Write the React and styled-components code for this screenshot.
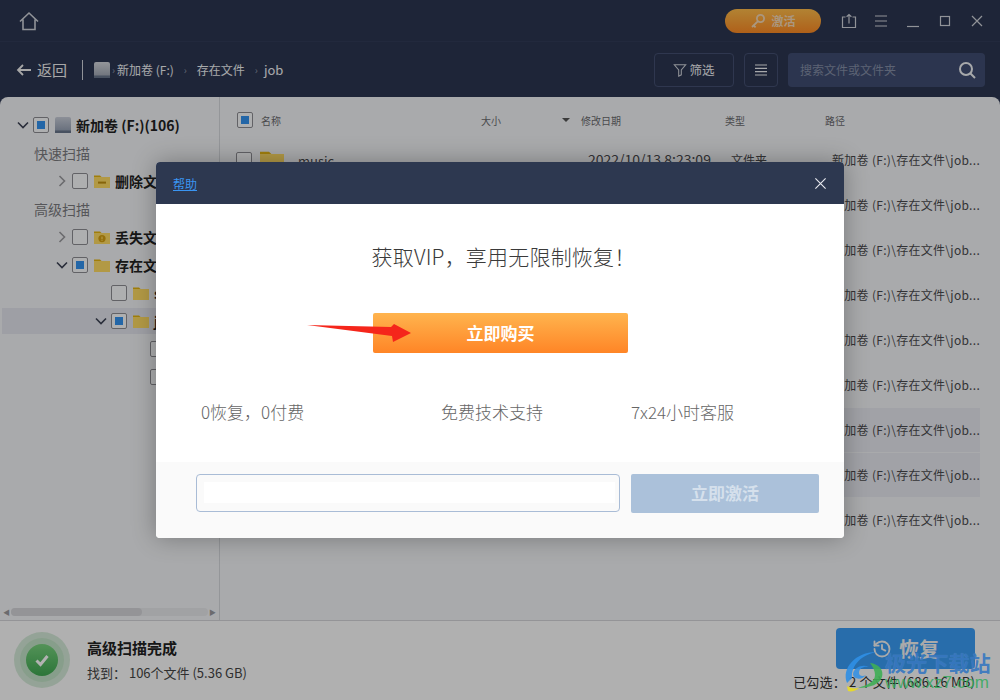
import React from "react";
import styled, { createGlobalStyle } from "styled-components";
import { History } from "lucide-react";

const GlobalStyle = createGlobalStyle`
  html, body { margin: 0; padding: 0; height: 700px; overflow: hidden; }
  body { font-family: "Noto Sans CJK SC", "Noto Sans", sans-serif; }
`;

const Page = styled.div`
  position: relative;
  width: 1000px;
  height: 700px;
  overflow: hidden;
  display: flex;
  flex-direction: column;
  background: #2c3651;
`;

const TopBar = styled.div`
  height: 41px;
  flex: none;
  display: flex;
  align-items: center;
  justify-content: space-between;
  padding: 0 7px 0 18px;
  border-bottom: 1px solid #323c58;
`;
const TopRight = styled.div`
  display: flex;
  align-items: center;
`;
const Activate = styled.div`
  width: 96px;
  height: 24px;
  margin-right: 12px;
  border-radius: 12px;
  display: flex;
  align-items: center;
  justify-content: center;
  gap: 5px;
  font-size: 12px;
  font-weight: 700;
  color: #f4d8b6;
  background: linear-gradient(#ffbc4a, #fb8a25);
`;
const WinBtn = styled.div`
  width: 32px;
  height: 24px;
  display: flex;
  align-items: center;
  justify-content: center;
`;

const NavBar = styled.div`
  height: 55px;
  flex: none;
  display: flex;
  align-items: center;
  padding: 0 15px 0 16px;
`;
const Back = styled.div`
  display: flex;
  align-items: center;
  gap: 5px;
  font-size: 15px;
  color: #f0f0f0;
  padding-right: 15px;
  border-right: 1px solid #d0d3da;
  height: 20px;
  margin-right: 11px;
`;
const Crumbs = styled.div`
  display: flex;
  align-items: center;
  flex: 1;
  font-size: 12px;
  color: #f0f2f5;
`;
const Sep = styled.span`
  color: #8d94a5;
  font-size: 10px;
  margin: 0 ${(p) => p.$gap || 4}px;
`;
const JobCrumb = styled.span`
  font-size: 13px;
  margin-left: -4px;
`;
const ToolBtn = styled.div`
  width: ${(p) => p.$w}px;
  height: 34px;
  box-sizing: border-box;
  margin-right: 10px;
  border: 1px solid #445072;
  border-radius: 4px;
  display: flex;
  align-items: center;
  justify-content: center;
  gap: 2px;
  font-size: 12.5px;
  color: #f0f2f5;
`;
const Search = styled.div`
  width: 197px;
  height: 34px;
  box-sizing: border-box;
  padding: 0 9px 0 12px;
  border-radius: 4px;
  background: #404d72;
  display: flex;
  align-items: center;
  justify-content: space-between;
  font-size: 12px;
  color: #848ea6;
`;

const Panel = styled.div`
  flex: 1;
  min-height: 0;
  display: flex;
  background: #f3f4f7;
  border-radius: 8px 8px 0 0;
`;
const Sidebar = styled.div`
  width: 219px;
  flex: none;
  border-right: 1px solid #d5d7db;
  display: flex;
  flex-direction: column;
  overflow: hidden;
`;
const Tree = styled.div`
  flex: 1;
  padding-top: 14px;
`;
const TreeRow = styled.div`
  height: ${(p) => (p.$selected ? 26 : 28)}px;
  margin: ${(p) => (p.$selected ? "1px 0 1px 2px" : "0")};
  padding-left: ${(p) => 15 + p.$depth * 39 - (p.$selected ? 2 : 0)}px;
  display: flex;
  align-items: center;
  white-space: nowrap;
  background: ${(p) => (p.$selected ? "#e2e4ec" : "transparent")};
  font-size: 14px;
  font-weight: 700;
  color: #222;
`;
const Chevron = styled.svg`
  width: 16px;
  height: 16px;
  flex: none;
  margin-right: 2px;
`;
const Section = styled.div`
  height: 28px;
  line-height: 29px;
  padding-left: 34px;
  font-size: 14px;
  color: #7b7b80;
`;
const Box = styled.div`
  width: 16px;
  height: 16px;
  flex: none;
  box-sizing: border-box;
  border: 1px solid #8d8d92;
  border-radius: 2px;
  background: #fafbfc;
  display: flex;
  align-items: center;
  justify-content: center;
  &::after {
    content: "";
    width: 8px;
    height: 8px;
    background: ${(p) => (p.$on ? "#3393f0" : "transparent")};
  }
`;
const TreeIcon = styled.span`
  display: flex;
  margin: 0 5px 0 6px;
`;
const HScroll = styled.div`
  height: 16px;
  display: flex;
  align-items: center;
  gap: 1px;
  padding: 0 3px;
  color: #9a9a9e;
  font-size: 7px;
`;
const Track = styled.div`
  flex: 1;
  height: 8px;
  border-radius: 4px;
  background: #e7e8eb;
`;
const Thumb = styled.div`
  width: 131px;
  height: 100%;
  border-radius: 4px;
  background: #d4d5d9;
`;

const List = styled.div`
  flex: 1;
  min-width: 0;
  padding-right: 20px;
`;
const Grid = styled.div`
  display: grid;
  grid-template-columns: 24px 220px 100px 144px 100px 1fr;
  align-items: center;
  padding-left: 17px;
`;
const ListHead = styled(Grid)`
  height: 36px;
  padding-top: 5px;
  font-size: 10px;
  color: #6a6a6e;
`;
const SizeHead = styled.div`
  display: flex;
  justify-content: space-between;
  padding-right: 11px;
  align-items: center;
`;
const Caret = styled.span`
  width: 0;
  height: 0;
  border: 4px solid transparent;
  border-top: 4px solid #555;
  border-bottom: 0;
`;
const Row = styled(Grid)`
  height: 44px;
  margin-bottom: 1px;
  padding-left: 16px;
  background: ${(p) => (p.$selected ? "#e7e9f0" : "transparent")};
  font-size: 12px;
  color: #4a4a4d;
`;
const NameCell = styled.div`
  display: flex;
  align-items: center;
  gap: 14px;
  font-size: 13px;
`;
const Cell = styled.div`
  padding: 0 0 2px 7px;
  white-space: nowrap;
`;
const DateCell = styled(Cell)`
  padding-left: 8px;
  font-size: 14px;
`;
const PathCell = styled(Cell)`
  padding-left: 8px;
  letter-spacing: 0.3px;
`;

const Footer = styled.div`
  height: 79px;
  flex: none;
  border-top: 1px solid #d4d5d8;
  background: #fcfcfc;
  display: flex;
  align-items: center;
  justify-content: space-between;
  padding: 0 25px 0 14px;
`;
const Status = styled.div`
  display: flex;
  align-items: center;
  gap: 17px;
  padding-bottom: 2px;
`;
const Halo = styled.div`
  width: 56px;
  height: 56px;
  border-radius: 50%;
  background: #d5ead8;
  display: flex;
  align-items: center;
  justify-content: center;
`;
const HaloInner = styled.div`
  width: 44px;
  height: 44px;
  border-radius: 50%;
  background: #c2e3c7;
  display: flex;
  align-items: center;
  justify-content: center;
`;
const Tick = styled.div`
  width: 32px;
  height: 32px;
  border-radius: 50%;
  background: linear-gradient(#78d27e, #3fa952);
  display: flex;
  align-items: center;
  justify-content: center;
`;
const StatusTitle = styled.div`
  font-size: 15px;
  font-weight: 700;
  color: #222;
  line-height: 20px;
  margin-bottom: 6px;
`;
const StatusText = styled.div`
  font-size: 13px;
  color: #444;
  line-height: 18px;
`;
const FootRight = styled.div`
  display: flex;
  flex-direction: column;
  align-items: flex-end;
  gap: 4px;
  padding-bottom: 2px;
`;
const Restore = styled.div`
  width: 139px;
  height: 41px;
  border-radius: 4px;
  background: #3a9cf5;
  display: flex;
  align-items: center;
  justify-content: center;
  gap: 7px;
  font-size: 20px;
  font-weight: 700;
  color: #f4f4f4;
`;
const Picked = styled.div`
  font-size: 13px;
  letter-spacing: 0.2px;
  line-height: 18px;
  color: #333;
  white-space: pre;
`;

const Overlay = styled.div`
  position: absolute;
  inset: 0;
  background: rgba(0, 0, 0, 0.3);
  display: flex;
  align-items: center;
  justify-content: center;
`;
const Modal = styled.div`
  position: relative;
  width: 688px;
  height: 376px;
  border-radius: 4px;
  overflow: hidden;
  background: #fff;
  display: flex;
  flex-direction: column;
  box-shadow: 0 0 24px rgba(0, 0, 0, 0.3);
`;
const ModalHead = styled.div`
  height: 42px;
  flex: none;
  background: #2d3850;
  display: flex;
  align-items: center;
  justify-content: space-between;
  padding: 0 17px 0 17px;
`;
const Help = styled.a`
  font-size: 12px;
  color: #3a95f2;
  text-decoration: underline;
`;
const ModalBody = styled.div`
  flex: 1;
  display: flex;
  flex-direction: column;
`;
const Title = styled.div`
  margin: 35px 0 0 7px;
  height: 34px;
  line-height: 34px;
  text-align: center;
  font-size: 21px;
  font-weight: 300;
  letter-spacing: 0.2px;
  color: #3a3a3a;
`;
const Buy = styled.div`
  width: 255px;
  height: 40px;
  box-sizing: border-box;
  padding-bottom: 2px;
  margin: 40px 0 0 217px;
  border-radius: 2px;
  background: linear-gradient(#ffb44e, #ff8526);
  display: flex;
  align-items: center;
  justify-content: center;
  font-size: 17px;
  font-weight: 700;
  color: #fff;
`;
const Perks = styled.div`
  display: grid;
  grid-template-columns: 240px 190px 1fr;
  padding-left: 45px;
  margin-top: 46px;
  font-size: 17px;
  font-weight: 300;
  line-height: 26px;
  color: #666;
`;
const ModalFoot = styled.div`
  height: 76px;
  margin-top: auto;
  flex: none;
  background: #fafafa;
  box-sizing: border-box;
  padding: 12px 25px 0 40px;
  display: flex;
  gap: 11px;
`;
const CodeInput = styled.div`
  width: 424px;
  height: 38px;
  box-sizing: border-box;
  border: 1px solid #a9bcd6;
  border-radius: 4px;
  padding: 7px 4px 8px 7px;
  background: #fafafa;
`;
const CodeFill = styled.div`
  height: 100%;
  background: #fff;
`;
const ActivateBtn = styled.div`
  width: 188px;
  height: 39px;
  box-sizing: border-box;
  padding-bottom: 2px;
  border-radius: 2px;
  background: #abc1da;
  display: flex;
  align-items: center;
  justify-content: center;
  font-size: 17px;
  font-weight: 700;
  color: #d5e0ec;
`;

const ArrowMark = styled.svg`
  position: absolute;
  left: 300px;
  top: 315px;
  width: 120px;
  height: 35px;
`;
const Watermark = styled.div`
  position: absolute;
  left: 840px;
  top: 650px;
  width: 155px;
  height: 45px;
`;
const MarkLogo = styled.svg`
  position: absolute;
  left: 0;
  top: 0;
  width: 46px;
  height: 44px;
`;
const MarkName = styled.div`
  position: absolute;
  left: 45px;
  top: 0;
  font-size: 21px;
  line-height: 24px;
  font-weight: 700;
  letter-spacing: 0.2px;
  color: rgba(50, 116, 190, 0.9);
  text-shadow: 0 0 1px rgba(255, 255, 255, 0.2);
  white-space: nowrap;
`;
const MarkUrl = styled.div`
  position: absolute;
  left: 45px;
  top: 24px;
  font-family: "Liberation Sans", sans-serif;
  font-size: 17px;
  line-height: 18px;
  color: rgba(50, 170, 90, 0.85);
`;

const Down = () => (
  <Chevron viewBox="0 0 16 16" fill="none" stroke="#3c4254" strokeWidth="1.6">
    <path d="M3 5.5 8 10.5 13 5.5" />
  </Chevron>
);
const Right = () => (
  <Chevron viewBox="0 0 16 16" fill="none" stroke="#9a9a9e" strokeWidth="1.6">
    <path d="M5.5 3 10.5 8 5.5 13" />
  </Chevron>
);

const Folder = ({ size = 16, badge }) => (
  <svg width={size} height={size} viewBox="0 0 16 16">
    <path d="M0 2.5h6l1.6 1.5H0z" fill="#e6b511" />
    <rect y="4" width="16" height="11" fill="#ffdc63" />
    {badge === "minus" && <rect x="4" y="8.6" width="8" height="2" fill="#c09010" />}
    {badge === "alert" && (
      <>
        <circle cx="8" cy="9.6" r="3.6" fill="#d6a010" />
        <rect x="7.4" y="7.6" width="1.2" height="2.6" fill="#ffdc63" />
        <rect x="7.4" y="10.8" width="1.2" height="1" fill="#ffdc63" />
      </>
    )}
  </svg>
);

const Drive = ({ light }) => (
  <svg width="16" height="16" viewBox="0 0 16 16">
    <defs>
      <linearGradient id={light ? "dl" : "dd"} x1="0" y1="0" x2="0" y2="1">
        <stop offset="0" stopColor={light ? "#c9ced9" : "#d3d6dc"} />
        <stop offset="1" stopColor={light ? "#8d99ad" : "#9aa0ad"} />
      </linearGradient>
    </defs>
    <rect y="0" width="16" height="16" rx="2" fill={`url(#${light ? "dl" : "dd"})`} />
    <rect y="13.5" width="16" height="2.5" fill="#68748a" />
  </svg>
);

const Ico = ({ w = 16, h = 16, view = "0 0 16 16", color = "#d0d3da", sw = 1.2, children }) => (
  <svg width={w} height={h} viewBox={view} fill="none" stroke={color} strokeWidth={sw}>
    {children}
  </svg>
);

const tree = [
  { kind: "row", depth: 0, chevron: "down", on: true, drive: true, label: "新加卷 (F:)(106)" },
  { kind: "section", label: "快速扫描" },
  { kind: "row", depth: 1, chevron: "right", badge: "minus", label: "删除文件" },
  { kind: "section", label: "高级扫描" },
  { kind: "row", depth: 1, chevron: "right", badge: "alert", label: "丢失文件" },
  { kind: "row", depth: 1, chevron: "down", on: true, label: "存在文件" },
  { kind: "row", depth: 2, label: "s" },
  { kind: "row", depth: 2, chevron: "down", on: true, selected: true, label: "job" },
  { kind: "row", depth: 3 },
  { kind: "row", depth: 3 },
];

const rows = Array.from({ length: 9 }, (_, i) => ({
  id: i,
  name: i === 0 ? "music" : "",
  date: i === 0 ? "2022/10/13 8:23:09" : "",
  type: i === 0 ? "文件夹" : "",
  selected: i === 6 || i === 7,
}));

const PATH = "新加卷 (F:)\\存在文件\\job...";

const App = () => {
  return (
    <Page>
      <GlobalStyle />
      <TopBar>
        <Ico w={22} h={22} view="0 0 22 22" sw={1.6}>
          <path d="M2 11.5 11 3l9 8.5M5 9.5V19.5H17V9.5" />
        </Ico>
        <TopRight>
          <Activate>
            <Ico view="0 0 16 16" color="#f4d8b6" sw={1.8}>
              <circle cx="10.5" cy="5.5" r="3.6" />
              <path d="M8 8.2 2 14M3.6 12.4l2 2" />
            </Ico>
            激活
          </Activate>
          <WinBtn>
            <Ico>
              <path d="M4.5 4H1.5v10.5h13V4h-3M8 10.5V1.5M5.6 3.8 8 1.5l2.4 2.3" />
            </Ico>
          </WinBtn>
          <WinBtn>
            <Ico>
              <path d="M2 3h12M2 8h12M2 13h12" />
            </Ico>
          </WinBtn>
          <WinBtn>
            <Ico>
              <path d="M2 13.5h12" />
            </Ico>
          </WinBtn>
          <WinBtn>
            <Ico>
              <rect x="3.5" y="3.5" width="9" height="9" />
            </Ico>
          </WinBtn>
          <WinBtn>
            <Ico>
              <path d="M3 3l10 10M13 3 3 13" />
            </Ico>
          </WinBtn>
        </TopRight>
      </TopBar>

      <NavBar>
        <Back>
          <Ico sw={1.8} color="#f0f0f0">
            <path d="M15 8H2M7 3 2 8l5 5" />
          </Ico>
          返回
        </Back>
        <Crumbs>
          <Drive />
          <Sep $gap={2}>›</Sep>
          新加卷 (F:)
          <Sep $gap={10}>›</Sep>
          存在文件
          <Sep $gap={10}>›</Sep>
          <JobCrumb>job</JobCrumb>
        </Crumbs>
        <ToolBtn $w={80}>
          <Ico w={14} h={14}>
            <path d="M1.5 2h13L9.5 8v5.5L6.5 15V8z" />
          </Ico>
          筛选
        </ToolBtn>
        <ToolBtn $w={34}>
          <Ico color="#f0f2f5">
            <path d="M2 3h12M2 6.3h12M2 9.7h12M2 13h12" />
          </Ico>
        </ToolBtn>
        <Search>
          搜索文件或文件夹
          <Ico w={18} h={18} view="0 0 18 18" sw={2} color="#f0f2f5">
            <circle cx="8" cy="8" r="6" />
            <path d="M12.5 12.5 17 17" />
          </Ico>
        </Search>
      </NavBar>

      <Panel>
        <Sidebar>
          <Tree>
            {tree.map((item, i) =>
              item.kind === "section" ? (
                <Section key={i}>{item.label}</Section>
              ) : (
                <TreeRow key={i} $depth={item.depth} $selected={item.selected}>
                  {item.chevron === "down" && <Down />}
                  {item.chevron === "right" && <Right />}
                  {!item.chevron && <Chevron as="span" />}
                  <Box $on={item.on} />
                  <TreeIcon>{item.drive ? <Drive light /> : <Folder badge={item.badge} />}</TreeIcon>
                  {item.label}
                </TreeRow>
              )
            )}
          </Tree>
          <HScroll>
            ◀
            <Track>
              <Thumb />
            </Track>
            ▶
          </HScroll>
        </Sidebar>

        <List>
          <ListHead>
            <Box $on />
            <div>名称</div>
            <SizeHead>
              大小
              <Caret />
            </SizeHead>
            <div>修改日期</div>
            <div>类型</div>
            <div>路径</div>
          </ListHead>
          {rows.map((row) => (
            <Row key={row.id} $selected={row.selected}>
              <Box />
              <NameCell>
                <Folder size={24} />
                {row.name}
              </NameCell>
              <div />
              <DateCell>{row.date}</DateCell>
              <Cell>{row.type}</Cell>
              <PathCell>{PATH}</PathCell>
            </Row>
          ))}
        </List>
      </Panel>

      <Footer>
        <Status>
          <Halo>
            <HaloInner>
              <Tick>
                <Ico w={18} h={18} view="0 0 18 18" color="#fff" sw={3}>
                  <path d="M3.5 9.5 7.5 13.5 14.5 5" />
                </Ico>
              </Tick>
            </HaloInner>
          </Halo>
          <div>
            <StatusTitle>高级扫描完成</StatusTitle>
            <StatusText>找到： 106个文件 (5.36 GB)</StatusText>
          </div>
        </Status>
        <FootRight>
          <Restore>
            <History size={20} strokeWidth={2.2} />
            恢复
          </Restore>
          <Picked>已勾选： 2 个文件 (686.16 MB)</Picked>
        </FootRight>
      </Footer>

      <Overlay>
        <Modal>
          <ModalHead>
            <Help>帮助</Help>
            <Ico w={13} h={13} view="0 0 14 14" color="#e8eaf0">
              <path d="M1.5 1.5l11 11M12.5 1.5l-11 11" />
            </Ico>
          </ModalHead>
          <ModalBody>
            <Title>获取VIP，享用无限制恢复！</Title>
            <Buy>立即购买</Buy>
            <Perks>
              <div>0恢复，0付费</div>
              <div>免费技术支持</div>
              <div>7x24小时客服</div>
            </Perks>
            <ModalFoot>
              <CodeInput>
                <CodeFill />
              </CodeInput>
              <ActivateBtn>立即激活</ActivateBtn>
            </ModalFoot>
          </ModalBody>
        </Modal>
      </Overlay>

      <ArrowMark viewBox="0 0 120 35">
        <polygon points="7,10 91,12 94,9 111,18 93,27 92,21" fill="#f5261b" />
      </ArrowMark>

      <Watermark>
        <MarkLogo viewBox="0 0 46 44" fill="none">
          <path d="M7 33C1 18 16 2 36 2 22 5 11 15 12 28z" fill="#2f8fe6" opacity="0.9" />
          <path d="M13 24c1-7 10-10 16-7-5-1-10 1-10 6 0 3 4 4 7 2-3 5-13 5-13-1z" fill="#2f8fe6" opacity="0.85" />
          <path d="M30 13c9 1 14 7 12 14-2 7-12 11-24 11 9-3 17-6 17-13 0-4-2-8-5-12z" fill="#3fae55" opacity="0.9" />
          <path d="M7 36c3 2 7 3 12 2-3 3-8 4-11 3z" fill="#e6d92c" />
        </MarkLogo>
        <MarkName>极光下载站</MarkName>
        <MarkUrl>www.xz7.com</MarkUrl>
      </Watermark>
    </Page>
  );
};

export default App;
